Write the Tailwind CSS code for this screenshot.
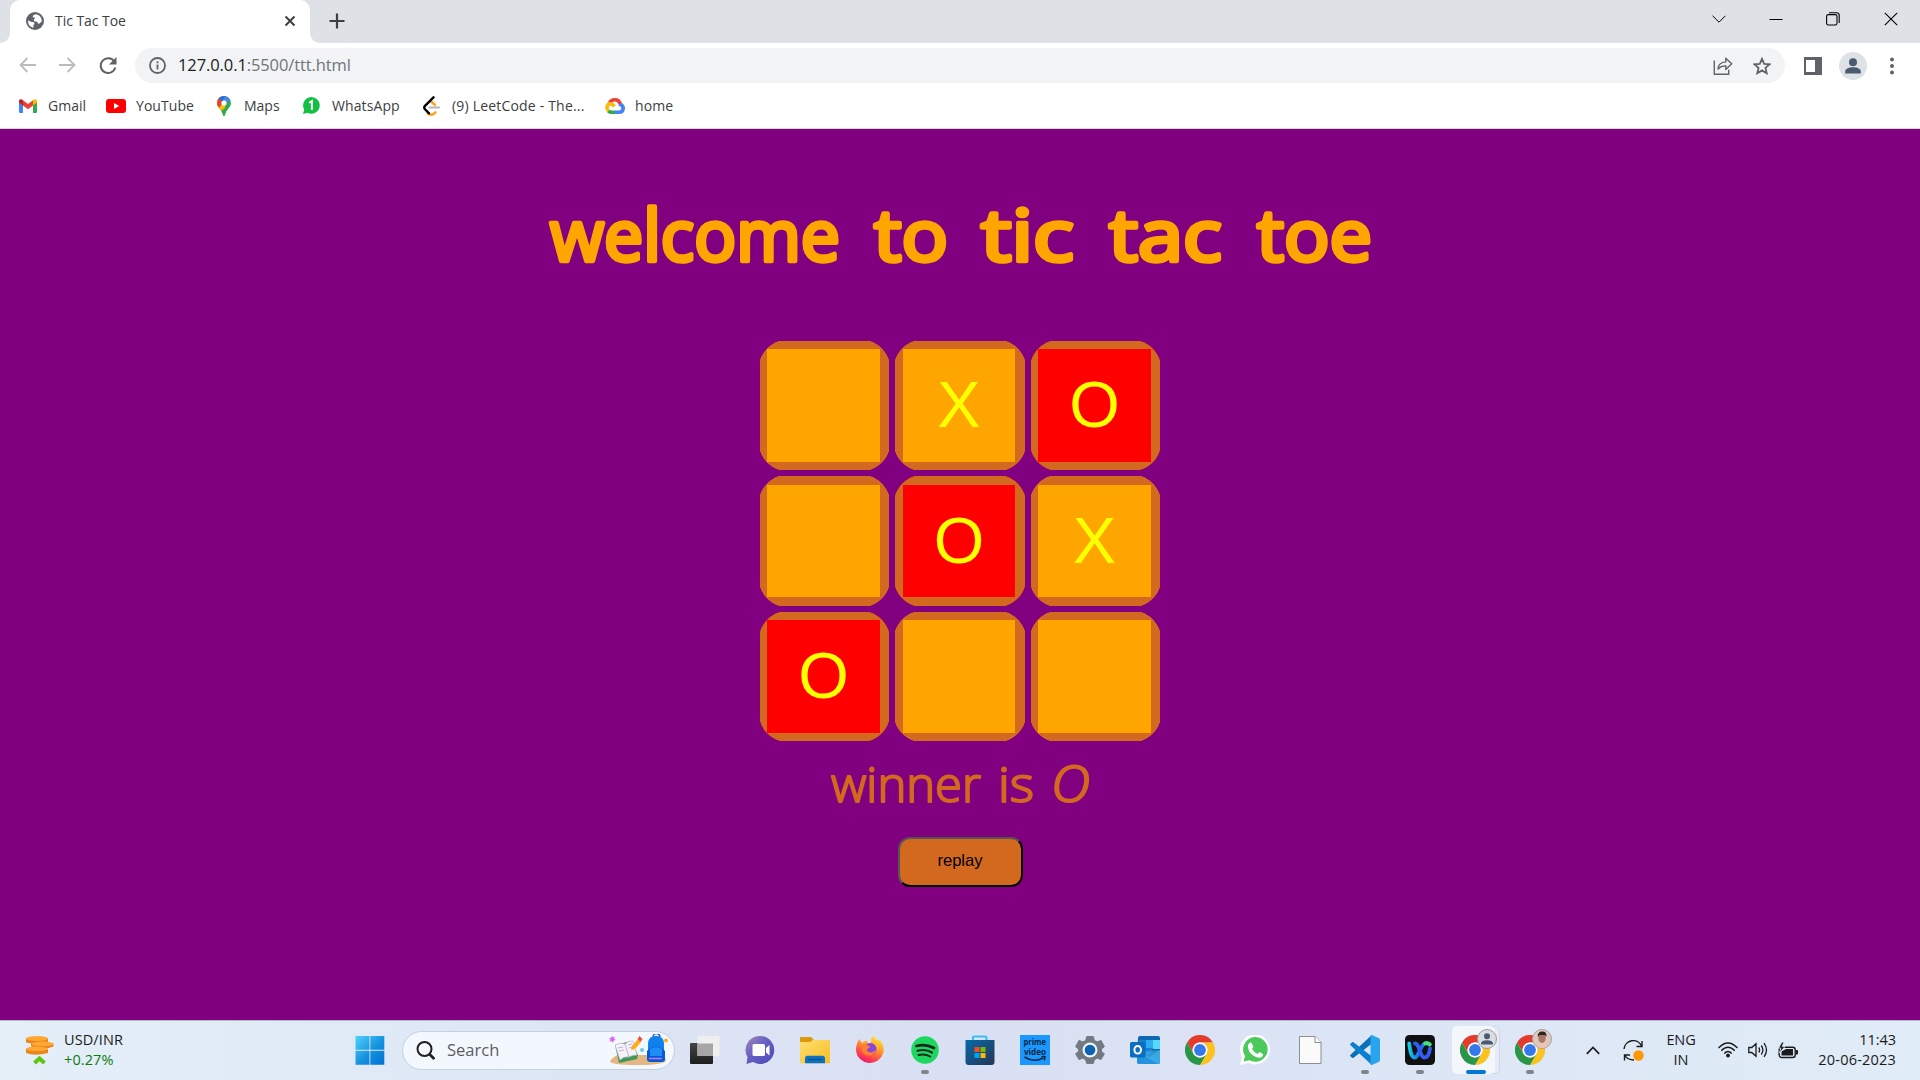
<!DOCTYPE html>
<html lang="en">
<head>
<meta charset="utf-8">
<title>Tic Tac Toe</title>
<script src="https://cdn.jsdelivr.net/npm/@tailwindcss/browser@4"></script>
</head>
<body class="w-[1920px] h-[1080px] overflow-hidden flex flex-col bg-white font-['Open_Sans',sans-serif] text-[#3c4043]">

<!-- Tab strip -->
<div class="h-[43px] shrink-0 bg-[#dee1e6] flex items-start">
  <div class="w-[10px] h-[43px] bg-white shrink-0"><div class="h-full bg-[#dee1e6] rounded-br-[10px]"></div></div>
  <div class="w-[300px] h-[43px] bg-white rounded-t-[10px] flex items-center pl-4 pr-[14px] pb-[1px]">
    <svg class="w-[18px] h-[18px]" viewBox="0 0 18 18"><circle cx="9" cy="9" r="9" fill="#5f6368"/><path d="M10.500 2.200C8.500 2.200 7 3 6.800 4.200c-.1 1 .6 1.300 1.700 1.300.8 0 .6.9 0 1.300-1 .5-.5 2-.2 2.400.6.6 2.200.2 2.800.6.800.5.3 1.800 1.500 1.900 1.500.1 1.500-1.700 3.200-1.900A7 7 0 0 0 10.500 2.200zM2 8.500c1.300.1 2.800 1.300 3.800 1.400 1.200.1 2.700.3 2.700 1.400 0 1-.8 1-1 2l-.2 2.400A7 7 0 0 1 2 8.500z" fill="#fff"/></svg>
    <span class="ml-[11px] pb-[2px] text-[14px] tracking-[-0.05px] grow whitespace-nowrap">Tic Tac Toe</span>
    <svg class="w-[12px] h-[12px]" viewBox="0 0 12 12" stroke="#3c4043" stroke-width="2"><path d="M1.500 1.500l9 9M10.500 1.500l-9 9"/></svg>
  </div>
  <div class="w-[10px] h-[43px] bg-white shrink-0"><div class="h-full bg-[#dee1e6] rounded-bl-[10px]"></div></div>
  <svg class="w-[16px] h-[16px] ml-[9px] mt-[13px]" viewBox="0 0 16 16" stroke="#3c4043" stroke-width="2.200"><path d="M8 .5v15M.5 8h15"/></svg>
  <div class="grow"></div>
  <div class="flex items-center h-[37px] pr-[22px] text-black">
    <svg class="w-[14px] h-[14px] mr-[43px]" viewBox="0 0 14 14" fill="none" stroke="currentColor" stroke-width="1"><path d="M.6 3.800L7 10.200l6.400-6.400"/></svg>
    <svg class="w-[14px] h-[14px] mr-[43px]" viewBox="0 0 14 14" stroke="currentColor"><path d="M.5 7.500h13"/></svg>
    <svg class="w-[14px] h-[14px] mr-[44px]" viewBox="0 0 14 14" fill="none" stroke="currentColor" stroke-width="1.100"><rect x=".6" y="2.600" width="10.400" height="10.400" rx="1.800"/><path d="M3 .8h7.500a2.700 2.700 0 0 1 2.700 2.700V11"/></svg>
    <svg class="w-[14px] h-[14px]" viewBox="0 0 14 14" stroke="currentColor" stroke-width="1.100"><path d="M.8.8l12.400 12.400M13.200.8L.8 13.200"/></svg>
  </div>
</div>

<!-- Toolbar -->
<div class="h-[45px] shrink-0 flex items-center pl-[19px] pr-[25px]">
  <svg class="w-[17px] h-[16px] mr-[23px] -mt-[1px]" viewBox="0 0 17 16" fill="none" stroke="#babcbe" stroke-width="1.800"><path d="M17 8H1.500M8.500 1L1.500 8l7 7"/></svg>
  <svg class="w-[17px] h-[16px] mr-[23px] -mt-[1px]" viewBox="0 0 17 16" fill="none" stroke="#babcbe" stroke-width="1.800"><path d="M0 8h15.500M8.500 1l7 7-7 7"/></svg>
  <svg class="w-[18px] h-[18px] mr-[18px]" viewBox="0 0 18 18" fill="none" stroke="#5f6368" stroke-width="2"><path d="M15.300 4.500A7.400 7.400 0 1 0 16.300 10.500"/><path d="M17.500 0v7.500H10z" fill="#5f6368" stroke="none"/></svg>
  <div class="w-[1650px] h-[35px] rounded-full bg-[#f1f3f4] flex items-center pl-[14px] pr-[14px]">
    <svg class="w-[17px] h-[17px]" viewBox="0 0 17 17" fill="none" stroke="#5f6368" stroke-width="1.800"><circle cx="8.500" cy="8.500" r="7.500"/><path d="M8.500 7.500v5M8.500 4.200v2"/></svg>
    <span class="ml-[12px] text-[16.5px] tracking-[-0.1px] grow whitespace-nowrap text-[#70757a]"><span class="text-[#202124]">127.0.0.1</span>:5500/ttt.html</span>
    <svg class="w-[20px] h-[18px] mr-[20px]" viewBox="0 0 20 18" fill="none" stroke="#5f6368" stroke-width="1.400"><path d="M1.300 3.500v13.700h14.400v-4.500"/><path d="M5 12c.3-4.200 3-6.800 7.800-7.100V1.200l5.900 5.600-5.900 5.600V8.900C9.300 8.800 7 9.800 5 12z" stroke-linejoin="round"/></svg>
    <svg class="w-[18px] h-[18px]" viewBox="0 0 18 18" fill="none" stroke="#5f6368" stroke-width="1.800"><path d="M9 1.800l2.200 5 5.400.5-4.100 3.600 1.200 5.300L9 13.400l-4.700 2.800 1.200-5.300-4.100-3.600 5.400-.5z"/></svg>
  </div>
  <svg class="w-[18px] h-[18px] ml-[19px] mr-[17px]" viewBox="0 0 18 18"><path d="M0 0h18v18H0z" fill="#5f6368"/><path d="M2 3h9v12H2z" fill="#fff"/></svg>
  <svg class="w-[28px] h-[28px]" viewBox="0 0 28 28"><circle cx="14" cy="14" r="14" fill="#dee1e6"/><g fill="#4a5a70"><circle cx="14" cy="10.300" r="4"/><path d="M6.200 21.500v-2c0-2.800 4-4.200 7.800-4.200s7.800 1.400 7.800 4.200v2z"/></g></svg>
  <svg class="w-[4px] h-[18px] ml-[23px]" viewBox="0 0 4 18" fill="#5f6368"><circle cx="2" cy="2.500" r="2"/><circle cx="2" cy="9" r="2"/><circle cx="2" cy="15.500" r="2"/></svg>
</div>

<!-- Bookmarks -->
<div class="h-[41px] shrink-0 border-b border-[#d5d7da] flex items-center pl-[19px] pb-[5px] text-[14px] whitespace-nowrap">
  <div class="flex items-center w-[87px]">
    <svg class="w-[18px] h-[14px] mr-[11px]" viewBox="0 0 18 14"><path d="M0 2v11q0 1 1 1h3V5z" fill="#4285f4"/><path d="M18 2v11q0 1-1 1h-3V5z" fill="#34a853"/><path d="M4 1.200l5 3.700 5-3.700v5.300l-5 3.800-5-3.800z" fill="#ea4335"/><path d="M0 3.500V2C0 .2 2.200-.4 3.500.8L4 1.200v5.300z" fill="#c5221f"/><path d="M18 3.500V2c0-1.800-2.200-2.400-3.500-1.200l-.5.4v5.300z" fill="#fbbc04"/></svg>
    <span>Gmail</span>
  </div>
  <div class="flex items-center w-[111px]">
    <svg class="w-[20px] h-[14px] mr-[10px]" viewBox="0 0 20 14"><rect width="20" height="14" rx="3" fill="#f00"/><path d="M8 4l5.300 3L8 10z" fill="#fff"/></svg>
    <span class="tracking-[0.05px]">YouTube</span>
  </div>
  <div class="flex items-center w-[86px]">
    <svg class="w-[14px] h-[20px] mr-[13px]" viewBox="0 0 14 20"><defs><clipPath id="pin"><path d="M7 0a7 7 0 0 1 7 7c0 4.500-4.800 6.300-5.800 11.800Q7.900 20 7 20t-1.200-1.200C4.800 13.300 0 11.500 0 7a7 7 0 0 1 7-7z"/></clipPath></defs><g clip-path="url(#pin)"><path d="M0 0h14v20H0z" fill="#34a853"/><path d="M0 0h14L7.200 7 1.500 13 0 10z" fill="#fbbc04"/><path d="M0 0h3l4 6-5.500 6L0 10z" fill="#ea4335"/><path d="M1.700 2.300L5 5.500 9.500 0H3z" fill="#1a73e8"/><path d="M5 5.500L9.500 0l3.800 3.200L9 8z" fill="#4285f4"/><path d="M2 12L9 4l-1 8-4 3z" fill="#fbbc04"/></g><circle cx="7" cy="7" r="2.600" fill="#fff"/></svg>
    <span>Maps</span>
  </div>
  <div class="flex items-center w-[120px]">
    <svg class="w-[17px] h-[17px] mr-[12px]" viewBox="0 0 17 17"><path d="M0 17l1.200-4.500A8.300 8.300 0 1 1 4.500 15.700z" fill="#12c143"/><path d="M6.200 5.800L8.900 4v9" fill="none" stroke="#fff" stroke-width="2"/></svg>
    <span class="tracking-[0.1px]">WhatsApp</span>
  </div>
  <div class="flex items-center w-[182px]">
    <svg class="w-[17px] h-[20px] mr-[12px]" viewBox="0 0 17 20" fill="none" stroke-linecap="round" stroke-width="2.400"><path d="M8 5.500l4 3.300M5 17.500c3 2.300 5.500 1.200 7.500-1.200" stroke="#ffa116"/><path d="M6.500 11.500h9.500" stroke="#b3b3b3" stroke-width="2"/><path d="M10.500 1.300L2 9.800q-1.500 1.700 0 3.500l4 4" stroke="#000"/></svg>
    <span class="tracking-[0.19px]">(9) LeetCode - The...</span>
  </div>
  <div class="flex items-center">
    <svg class="w-[20px] h-[16px] mr-[10px]" viewBox="0 0 20 16" fill="none" stroke-width="3.600"><path d="M14 5.500c2.800 1.200 4.300 3 4.200 5-.2 2.300-1.800 3.700-4 3.700H10" stroke="#4285f4"/><path d="M4.500 5.200C5.500 2.500 8 1.800 10 1.800c2.500 0 4.300 1.200 5.200 4" stroke="#ea4335"/><path d="M10 14.200H5.500L3 13" stroke="#34a853"/><path d="M3.500 13c-2.300-2-2-7 1.800-7.200 2 0 3.200 1.300 4 2.700" stroke="#fbbc05"/></svg>
    <span class="tracking-[0.1px]">home</span>
  </div>
</div>

<!-- Game page -->
<main class="h-[891px] shrink-0 bg-[purple] flex flex-col items-center">
  <h1 class="mt-[61px] h-[90px]">
    <svg class="w-[840px] h-[90px]" viewBox="540 190 840 90" font-family="Open Sans, sans-serif" font-size="71" font-weight="400" fill="orange" stroke="orange" stroke-width="4.500" stroke-linejoin="round">
      <text x="550" y="261" textLength="290" lengthAdjust="spacingAndGlyphs">welcome</text>
      <text x="874" y="261" textLength="74" lengthAdjust="spacingAndGlyphs">to</text>
      <text x="981" y="261" textLength="93" lengthAdjust="spacingAndGlyphs">tic</text>
      <text x="1109" y="261" textLength="113" lengthAdjust="spacingAndGlyphs">tac</text>
      <text x="1257" y="261" textLength="115" lengthAdjust="spacingAndGlyphs">toe</text>
    </svg>
  </h1>
  <div class="mt-[61px] grid grid-cols-[129px_130px_129px] grid-rows-[129px_130px_129px] gap-[6px] font-['Liberation_Sans',Arial,sans-serif] text-[65px] leading-[112px] text-center text-[yellow]">
    <div class="border-[#d2691e] border-t-8 border-b-8 border-l-7 border-r-9 bg-[orange] [clip-path:path('M20_0H109A29_29_0_0_1_129_20V109A29_29_0_0_1_109_129H20A29_29_0_0_1_0_109V20A29_29_0_0_1_20_0Z')]"></div>
    <div class="border-[#d2691e] border-t-8 border-b-8 border-l-8 border-r-10 bg-[orange] [clip-path:path('M20_0H110A29_29_0_0_1_130_20V109A29_29_0_0_1_110_129H20A29_29_0_0_1_0_109V20A29_29_0_0_1_20_0Z')]">X</div>
    <div class="border-[#d2691e] border-t-8 border-b-8 border-l-7 border-r-9 bg-[red] [clip-path:path('M20_0H109A29_29_0_0_1_129_20V109A29_29_0_0_1_109_129H20A29_29_0_0_1_0_109V20A29_29_0_0_1_20_0Z')]">O</div>
    <div class="border-[#d2691e] border-t-9 border-b-9 border-l-7 border-r-9 bg-[orange] [clip-path:path('M20_0H109A29_29_0_0_1_129_20V110A29_29_0_0_1_109_130H20A29_29_0_0_1_0_110V20A29_29_0_0_1_20_0Z')]"></div>
    <div class="border-[#d2691e] border-t-9 border-b-9 border-l-8 border-r-10 bg-[red] [clip-path:path('M20_0H110A29_29_0_0_1_130_20V110A29_29_0_0_1_110_130H20A29_29_0_0_1_0_110V20A29_29_0_0_1_20_0Z')]">O</div>
    <div class="border-[#d2691e] border-t-9 border-b-9 border-l-7 border-r-9 bg-[orange] [clip-path:path('M20_0H109A29_29_0_0_1_129_20V110A29_29_0_0_1_109_130H20A29_29_0_0_1_0_110V20A29_29_0_0_1_20_0Z')]">X</div>
    <div class="border-[#d2691e] border-t-8 border-b-8 border-l-7 border-r-9 bg-[red] [clip-path:path('M20_0H109A29_29_0_0_1_129_20V109A29_29_0_0_1_109_129H20A29_29_0_0_1_0_109V20A29_29_0_0_1_20_0Z')]">O</div>
    <div class="border-[#d2691e] border-t-8 border-b-8 border-l-8 border-r-10 bg-[orange] [clip-path:path('M20_0H110A29_29_0_0_1_130_20V109A29_29_0_0_1_110_129H20A29_29_0_0_1_0_109V20A29_29_0_0_1_20_0Z')]"></div>
    <div class="border-[#d2691e] border-t-8 border-b-8 border-l-7 border-r-9 bg-[orange] [clip-path:path('M20_0H109A29_29_0_0_1_129_20V109A29_29_0_0_1_109_129H20A29_29_0_0_1_0_109V20A29_29_0_0_1_20_0Z')]"></div>
  </div>
  <p class="mt-[9px] h-[70px]">
    <svg class="w-[300px] h-[70px]" viewBox="810 750 300 70" font-family="Open Sans, sans-serif" font-size="48" font-weight="300" fill="chocolate" stroke="chocolate" stroke-width="2" stroke-linejoin="round">
      <text x="831" y="802" textLength="150" lengthAdjust="spacingAndGlyphs">winner</text>
      <text x="998" y="802" textLength="36" lengthAdjust="spacingAndGlyphs">is</text>
      <text x="1051" y="802" textLength="39" lengthAdjust="spacingAndGlyphs" font-style="italic" font-size="50">O</text>
    </svg>
  </p>
  <button class="mt-[17px] w-[125px] h-[50px] rounded-[12px] border-2 border-t-[#555] border-l-[#555] border-b-black border-r-black bg-[#d2691e] text-black text-[16.6px] leading-none font-['Liberation_Sans',Arial,sans-serif] pb-px">replay</button>
</main>

<!-- Taskbar -->
<footer class="h-[60px] shrink-0 border-t border-[#b3b9c2] bg-linear-to-r from-[#e4eff8] via-[#d9e0f3] via-50% to-[#e0ecf7] flex items-center text-[14px] leading-[20px] text-[#1b1b1b] whitespace-nowrap">
  <div class="flex items-center w-[354px] pl-[25px] -mt-px">
    <svg class="w-[30px] h-[30px] mr-[9px]" viewBox="0 0 30 30"><g fill="#e9851c"><path d="M1 14v4q9 3.500 22 0v-4z"/><path d="M6 8.500h22.500v3q-9 4-22.500 0z"/><path d="M1 3.500h22v4q-9 3.500-22 0z"/></g><g fill="#ffa834"><ellipse cx="12" cy="13.800" rx="11" ry="2.300"/><ellipse cx="17.500" cy="8.800" rx="11" ry="2.300"/><ellipse cx="12" cy="3.600" rx="11" ry="2.500"/></g><path d="M9.500 28l5-4.500 5 4.500" fill="none" stroke="#5cc514" stroke-width="4"/></svg>
    <div class="text-[14.5px]"><div class="tracking-[0.1px]">USD/INR</div><div class="text-[#0f7b0f] tracking-[0.1px]">+0.27%</div></div>
  </div>
  <svg class="w-[30px] h-[30px] mr-[17px] ml-px -mt-px" viewBox="0 0 30 30"><defs><linearGradient id="win" x1="0" y1="0" x2="1" y2="1"><stop stop-color="#50d2fb"/><stop offset=".55" stop-color="#1591dc"/><stop offset="1" stop-color="#0070d4"/></linearGradient></defs><path d="M.5 1h14v13.700H.5zM15.300 1h14v13.700h-14zM.5 15.700h14v14H.5zM15.300 15.700h14v14h-14z" fill="url(#win)"/></svg>
  <div class="w-[273px] h-[39px] -mt-px rounded-full bg-[#f3f7fe] border border-[#c3cfe3] flex items-center pl-[13px] pr-[6px]">
    <svg class="w-[19px] h-[19px] mr-[12px]" viewBox="0 0 19 19" fill="none" stroke="#202020" stroke-width="2"><circle cx="8.500" cy="8" r="7"/><path d="M13.300 13l5 5" stroke-width="2.600"/></svg>
    <span class="text-[16.5px] text-[#5a5d63] grow">Search</span>
    <svg class="w-[60px] h-[32px]" viewBox="0 0 60 32"><path d="M2 27q6-8 16-6h30q9 1 10 5 0 5-28 5T2 27z" fill="#e3b683"/><path d="M7 11l4 18 18-4 1-4-7-14z" fill="#3f9956"/><path d="M7 11q5-3 10-1 5-4 8-3l4 14q-5 0-8 2-5-1-9 3z" fill="#f5f2fa" stroke="#b9b3ce" stroke-width=".7"/><path d="M17 10l4 13M10 14l5-1M11 17l5-1M20 11l4-1M21 14l4-1" stroke="#aaa3c4" stroke-width=".8"/><path d="M24 12l6-7 3 3-6 7-4 1z" fill="#ffae1a"/><path d="M29.500 5l2-3 3 3-2 3z" fill="#e5533d"/><path d="M4 1.500l1 2 2-1-1 2.200 2 1.300-2.300.5L5 9 3.600 7 1.400 7.500 2.500 5.500 1 4l2.300-.2z" fill="#d666f5"/><path d="M45 4q0-5 4-4.500 3 .5 3 4" fill="none" stroke="#1e5db8" stroke-width="1.400"/><rect x="40" y="2" width="16" height="25" rx="7" fill="#1181ee"/><path d="M39 17q9-9 18 0v9q-1 2-3 2H42q-2 0-3-2z" fill="#065ad2"/><path d="M42 15q6-4 12 0v7H42z" fill="#1e8cf5"/><path d="M41 24.500h13" stroke="#c078ff" stroke-width="1.500"/><circle cx="34" cy="16" r="2" fill="#63cbe8"/><circle cx="58" cy="6.500" r="1.900" fill="#ffac0a"/></svg>
  </div>
  <div class="flex ml-[2.5px] h-[60px] -mt-px [&>div]:w-[55px] [&>div]:h-[60px] [&>div]:flex [&>div]:items-center [&>div]:justify-center [&>div]:relative [&_svg]:w-[30px] [&_svg]:h-[30px]">
    <div><svg viewBox="0 0 30 30"><defs><linearGradient id="tv" x1="0" y1="0" x2="0" y2="1"><stop stop-color="#444"/><stop offset="1" stop-color="#1e1e1e"/></linearGradient></defs><rect x="0" y="8" width="23" height="21" rx="1" fill="url(#tv)"/><path d="M7.500 1h22v20h-22z" fill="#efefef"/><path d="M7.500 8.500H23V21H7.500z" fill="#a6a6a6"/></svg></div>
    <div><svg viewBox="0 0 30 30"><defs><linearGradient id="chat" x1="0" y1="0" x2="1" y2="1"><stop stop-color="#a889bd"/><stop offset=".45" stop-color="#6560c2"/><stop offset="1" stop-color="#4b4bb8"/></linearGradient></defs><path d="M15.500 1A14 14 0 1 1 8 27l-6.500 2 1-7A14 14 0 0 1 15.500 1z" fill="url(#chat)"/><rect x="7.500" y="9" width="12.500" height="12" rx="1.500" fill="#fff"/><path d="M21 13l3.500-3v10.500L21 17.500z" fill="#fff"/></svg></div>
    <div><svg viewBox="0 0 30 30"><defs><linearGradient id="fold" x1="0" y1="0" x2="1" y2="1"><stop stop-color="#ffdf70"/><stop offset="1" stop-color="#f9bd22"/></linearGradient></defs><path d="M0 2h11l3 3h16v8H0z" fill="#dc9a0b"/><path d="M0 7h10l3-2h17v22.500q0 .8-1 .8H1q-1 0-1-.8z" fill="url(#fold)"/><path d="M5 28.300v-5q0-2.500 2.500-2.500h15q2.500 0 2.500 2.500v5z" fill="#0a72c0"/><path d="M8 24.500h14" stroke="#064c8a" stroke-width="1.200"/></svg></div>
    <div><svg viewBox="0 0 30 30"><defs><linearGradient id="fox" x1=".8" y1="0" x2=".3" y2="1"><stop stop-color="#fff04a"/><stop offset=".45" stop-color="#ff922a"/><stop offset=".8" stop-color="#ff3852"/><stop offset="1" stop-color="#e71a78"/></linearGradient></defs><path d="M4 4l3 4 4-2.500q2 3 5 3-1-5 2.500-8 2 4 5 5l1-1c4 4 5 9 3.800 13.500A14 14 0 0 1 1 16C.8 12 2 8 4 4z" fill="url(#fox)"/><circle cx="15.500" cy="14" r="6" fill="#8b45dc"/><path d="M7.500 10c3-1 4 0 7.500 1.500-.5 2-3 2-3 3.500 1 3.500 6 3 9 0-1 6-11 8-14 1.500z" fill="#ff812c"/><path d="M17 7c4 2 6 5 5 9 3-4 1-8-2-10z" fill="#ffc22e"/></svg></div>
    <div><svg viewBox="0 0 30 30"><circle cx="15" cy="15" r="13.800" fill="#1ed760"/><g fill="none" stroke="#17271c" stroke-linecap="round"><path d="M6.500 11q9-2.500 17.500 2" stroke-width="2.700"/><path d="M7.500 15.700q8-2 14.500 1.800" stroke-width="2.200"/><path d="M8.500 20q6.500-1.500 11.800 1.500" stroke-width="1.800"/></g></svg><i class="absolute bottom-[6px] w-2 h-1 rounded-full bg-[#80858d]"></i></div>
    <div><svg viewBox="0 0 30 30"><defs><linearGradient id="store" x1="0" y1="0" x2="1" y2="1"><stop stop-color="#0869a9"/><stop offset="1" stop-color="#263654"/></linearGradient></defs><path d="M8 8V2.500q0-1 1-1h11.500q1 0 1 1V8" fill="none" stroke="#35bdf3" stroke-width="1.700"/><path d="M.5 5h29v22q0 3-3 3h-23q-3 0-3-3z" fill="url(#store)"/><path d="M8 5V2.500q0-1 1-1h11.500q1 0 1 1V5" fill="none" stroke="#35bdf3" stroke-width="1.700"/><path d="M9.500 12h5v5h-5z" fill="#f25022"/><path d="M15.500 12h5v5h-5z" fill="#7fba00"/><path d="M9.500 18h5v5h-5z" fill="#00a4ef"/><path d="M15.500 18h5v5h-5z" fill="#ffb900"/></svg></div>
    <div><svg viewBox="0 0 30 30"><path d="M0 0h30v30H0z" fill="#1a98ff"/><text x="3.500" y="9.500" textLength="22.500" lengthAdjust="spacingAndGlyphs" font-family="Open Sans" font-weight="700" font-size="8" fill="#07263f">prime</text><text x="4" y="19.500" textLength="22" lengthAdjust="spacingAndGlyphs" font-family="Open Sans" font-weight="700" font-size="8" fill="#07263f">video</text><path d="M4.500 22q9 6 18.500 1M21.500 21.500l3.500.3-.8 3.500" fill="none" stroke="#07263f" stroke-width="1.600"/></svg></div>
    <div><svg viewBox="0 0 30 30"><path d="M11.500 1h7l1 4 3 1.500L26.500 5 30 11.500 27 14v2.500l3 2.500-3.500 6-4-1.500-3 1.700-1 3.800h-7l-1-3.800-3-1.700-4 1.500L0 19l3-2.500V14l-3-2.500L3.500 5l4 1.500 3-1.500z" fill="#717a82" stroke="#717a82" stroke-linejoin="round" transform="translate(.6 .6) scale(.96)"/><circle cx="15" cy="15" r="7.500" fill="#f2f2f2"/><circle cx="15" cy="15" r="5.300" fill="#0a62b4"/></svg></div>
    <div><svg viewBox="0 0 30 30"><path d="M8 3q0-2 2-2h18q2 0 2 2v24q0 2-2 2H10q-3 0-3-3z" fill="#1068b0"/><path d="M9 5h7v9H9z" fill="#1681cf"/><path d="M16 5h7v9h-7z" fill="#2daaf0"/><path d="M23 5h7v9h-7z" fill="#54daff"/><path d="M16 13h7l-3 7h-4z" fill="#1a80d0"/><path d="M7 15l12 7 11-7v12q0 2-2 2H9q-2 0-2-2z" fill="#2593db"/><path d="M30 15v12q0 2-2 2L7 17z" fill="#49bff0" opacity=".5"/><rect y="7" width="15.500" height="15.500" rx="1.500" fill="#0a6fc4"/><ellipse cx="7.700" cy="14.800" rx="3.300" ry="3.800" fill="none" stroke="#fff" stroke-width="2"/></svg></div>
    <div><svg viewBox="0 0 30 30"><path d="M2 7.500A15 15 0 0 1 28 7.500H15A7.500 7.500 0 0 0 8.500 18.750z" fill="#e33b2e"/><path d="M28 7.500A15 15 0 0 1 15 30l6.500-11.250A7.500 7.500 0 0 0 15 7.500z" fill="#fcc31e"/><path d="M15 30A15 15 0 0 1 2 7.500l6.500 11.250a7.500 7.500 0 0 0 13 0z" fill="#299647"/><circle cx="15" cy="15" r="7.400" fill="#fff"/><circle cx="15" cy="15" r="5.900" fill="#3478ec"/></svg></div>
    <div><svg viewBox="0 0 30 30"><path d="M0 30l2-8A15 15 0 1 1 8.500 28z" fill="#fff"/><path d="M3.500 26.500l1.500-5.500a12.300 12.300 0 1 1 4.500 4.200z" fill="#4bc95b"/><path d="M9 8.500q1.500-2 3 0l1.200 3q.3 1-1.200 2.500 2 3.500 5.500 5 1.500-2 2.300-1.800l3 1.500q1 2-2 3.800-3 1-7.500-2T8.500 14q-1.500-3 .5-5.500z" fill="#fff"/></svg></div>
    <div><svg viewBox="0 0 30 30"><path d="M4.500 1.500H20l6 6v21H4.500z" fill="#fafafa" stroke="#8e8e8e"/><path d="M20 1.500v6h6" fill="#fff" stroke="#8e8e8e"/></svg></div>
    <div><svg viewBox="0 0 30 30"><path d="M22 0v8.500L3.500 22.800q-.8.500-1.500 0l-1.500-1.500q-.8-.8 0-1.600L21 .8z" fill="#0b70b8"/><path d="M22 30v-8.500L3.500 7.200q-.8-.5-1.500 0L.5 8.700q-.8.800 0 1.600L21 29.200z" fill="#0a80cf"/><path d="M22 0l7 3.200q1 .5 1 1.600v20.400q0 1.100-1 1.600L22 30q-1.500 0-1.500-1.500v-27Q20.500 0 22 0z" fill="#29a4ee"/></svg><i class="absolute bottom-[6px] w-2 h-1 rounded-full bg-[#80858d]"></i></div>
    <div><svg viewBox="0 0 30 30"><defs><linearGradient id="wx" gradientUnits="userSpaceOnUse" x1="4" y1="0" x2="26" y2="0"><stop stop-color="#15cbe2"/><stop offset=".5" stop-color="#1764f3"/><stop offset=".75" stop-color="#2f7af0"/><stop offset="1" stop-color="#47e875"/></linearGradient></defs><rect width="30" height="30" rx="4.500" fill="#111"/><g fill="none" stroke-width="3.800" stroke-linecap="round"><path d="M4.200 8.500C5 15 6 22 9.500 22.500c4.500.5 5.500-13.500 11-14.200q2.500-.3 4 1" stroke="url(#wx)"/><path d="M10 8.500c5 0 4.500 14 9.500 14 3.500 0 5-5 5.500-9" stroke="#335cf5"/><path d="M20 8.400q3-1 4.800 1" stroke="#45e07a"/></g></svg><i class="absolute bottom-[6px] w-2 h-1 rounded-full bg-[#80858d]"></i></div>
    <div>
      <span class="absolute left-[4px] top-[6px] w-[48px] h-[48px] rounded-[5px] border border-[#d0d6e2] bg-[#e7ebf5]"></span>
      <span class="absolute left-[4px] top-[6px] w-[43px] h-[48px] rounded-[5px] bg-[#f3f6fb]"></span>
      <svg class="relative" viewBox="0 0 30 30"><path d="M2 7.500A15 15 0 0 1 28 7.500H15A7.500 7.500 0 0 0 8.500 18.750z" fill="#e33b2e"/><path d="M28 7.500A15 15 0 0 1 15 30l6.500-11.250A7.500 7.500 0 0 0 15 7.500z" fill="#fcc31e"/><path d="M15 30A15 15 0 0 1 2 7.500l6.500 11.250a7.500 7.500 0 0 0 13 0z" fill="#299647"/><circle cx="15" cy="15" r="7.400" fill="#fff"/><circle cx="15" cy="15" r="5.900" fill="#3478ec"/></svg>
      <span class="absolute left-[29px] top-[9px] w-5 h-5 rounded-full bg-[#d9dce1] border border-[#9a9da2] [&_svg]:w-[18px]! [&_svg]:h-[18px]!"><svg viewBox="0 0 18 18" fill="#4a5a70"><circle cx="9" cy="6.200" r="3"/><path d="M3 14.500v-1.300q.5-3 6-3t6 3v1.300z"/></svg></span>
      <i class="absolute bottom-[6px] left-[18px] w-5 h-1 rounded-full bg-[#0078d4]"></i>
    </div>
    <div>
      <svg viewBox="0 0 30 30"><path d="M2 7.500A15 15 0 0 1 28 7.500H15A7.500 7.500 0 0 0 8.500 18.750z" fill="#e33b2e"/><path d="M28 7.500A15 15 0 0 1 15 30l6.500-11.250A7.500 7.500 0 0 0 15 7.500z" fill="#fcc31e"/><path d="M15 30A15 15 0 0 1 2 7.500l6.500 11.250a7.500 7.500 0 0 0 13 0z" fill="#299647"/><circle cx="15" cy="15" r="7.400" fill="#fff"/><circle cx="15" cy="15" r="5.900" fill="#3478ec"/></svg>
      <span class="absolute left-[29px] top-[9px] w-5 h-5 rounded-full overflow-hidden bg-[#dcc8c0] border border-[#aaa09c] [&_svg]:w-[18px]! [&_svg]:h-[18px]!"><svg viewBox="0 0 18 18"><path d="M2 18q1-5 5-5.500h4q4 .5 5 5.500z" fill="#e9c6b4"/><ellipse cx="9" cy="8" rx="3.700" ry="5" fill="#a87661"/><path d="M4.800 7q-.5-5.500 4.500-5.500T13.300 7l-1.300-2H6.500z" fill="#2c2220"/></svg></span>
      <i class="absolute bottom-[6px] w-2 h-1 rounded-full bg-[#80858d]"></i>
    </div>
  </div>
  <div class="grow"></div>
  <div class="flex items-center pr-[24px] shrink-0 -mt-px">
    <svg class="w-[14px] h-[9px] mr-[23px]" viewBox="0 0 14 9" fill="none" stroke="#1b1b1b" stroke-width="1.700"><path d="M.8 7.800L7 1.500l6.200 6.300"/></svg>
    <svg class="w-[21px] h-[21px] mr-[22px]" viewBox="0 0 21 21" fill="none" stroke="#1b1b1b" stroke-width="1.400"><path d="M1 9A9.200 9.200 0 0 1 18.500 6M19 1v5.500h-5.500M7 15H1.500v5.500M1.500 15q3 5 9.500 5"/><circle cx="15.500" cy="15.500" r="5.200" fill="#ff9800" stroke="none"/></svg>
    <div class="w-[30px] text-center text-[14.5px] tracking-[-0.1px] mr-[22px]"><div>ENG</div><div>IN</div></div>
    <svg class="w-[20px] h-[16px] mr-[10px]" viewBox="0 0 20 16" fill="none" stroke="#1b1b1b" stroke-width="1.400"><path d="M.5 6q9.500-10 19 0M3.300 8.800q6.700-7 13.400 0M6.200 11.500q3.800-4 7.600 0"/><circle cx="10" cy="13.500" r="1.900" fill="#1b1b1b" stroke="none"/></svg>
    <svg class="w-[20px] h-[16px] mr-[10px]" viewBox="0 0 20 16" fill="none" stroke="#1b1b1b" stroke-width="1.300"><path d="M.8 5.500h3L8 1.800v12.400l-4.200-3.700h-3zM10.700 5.500q1.800 2.500 0 5M13.300 3.500q3.200 4.500 0 9M16 1.200q5 6.800 0 13.600"/></svg>
    <svg class="w-[20px] h-[17px] mr-[18px]" viewBox="0 0 20 17"><rect x="1.200" y="5.200" width="16" height="10.300" rx="2.500" fill="none" stroke="#1b1b1b" stroke-width="1.400"/><path d="M3.500 13.500V9.500L8 7h7v6.500zM18 8h1.300q.7 0 .7 1v2.500q0 1-.7 1H18z" fill="#1b1b1b"/><path d="M4 0L.5 6h2.300L1.500 11 7 4.500H4.200L6 0z" fill="#1b1b1b" stroke="#e0ecf7" stroke-width=".8"/></svg>
    <div class="text-right w-[80px] text-[14.5px]"><div class="tracking-[-0.05px]">11:43</div><div class="tracking-[0.2px]">20-06-2023</div></div>
  </div>
</footer>
</body>
</html>
